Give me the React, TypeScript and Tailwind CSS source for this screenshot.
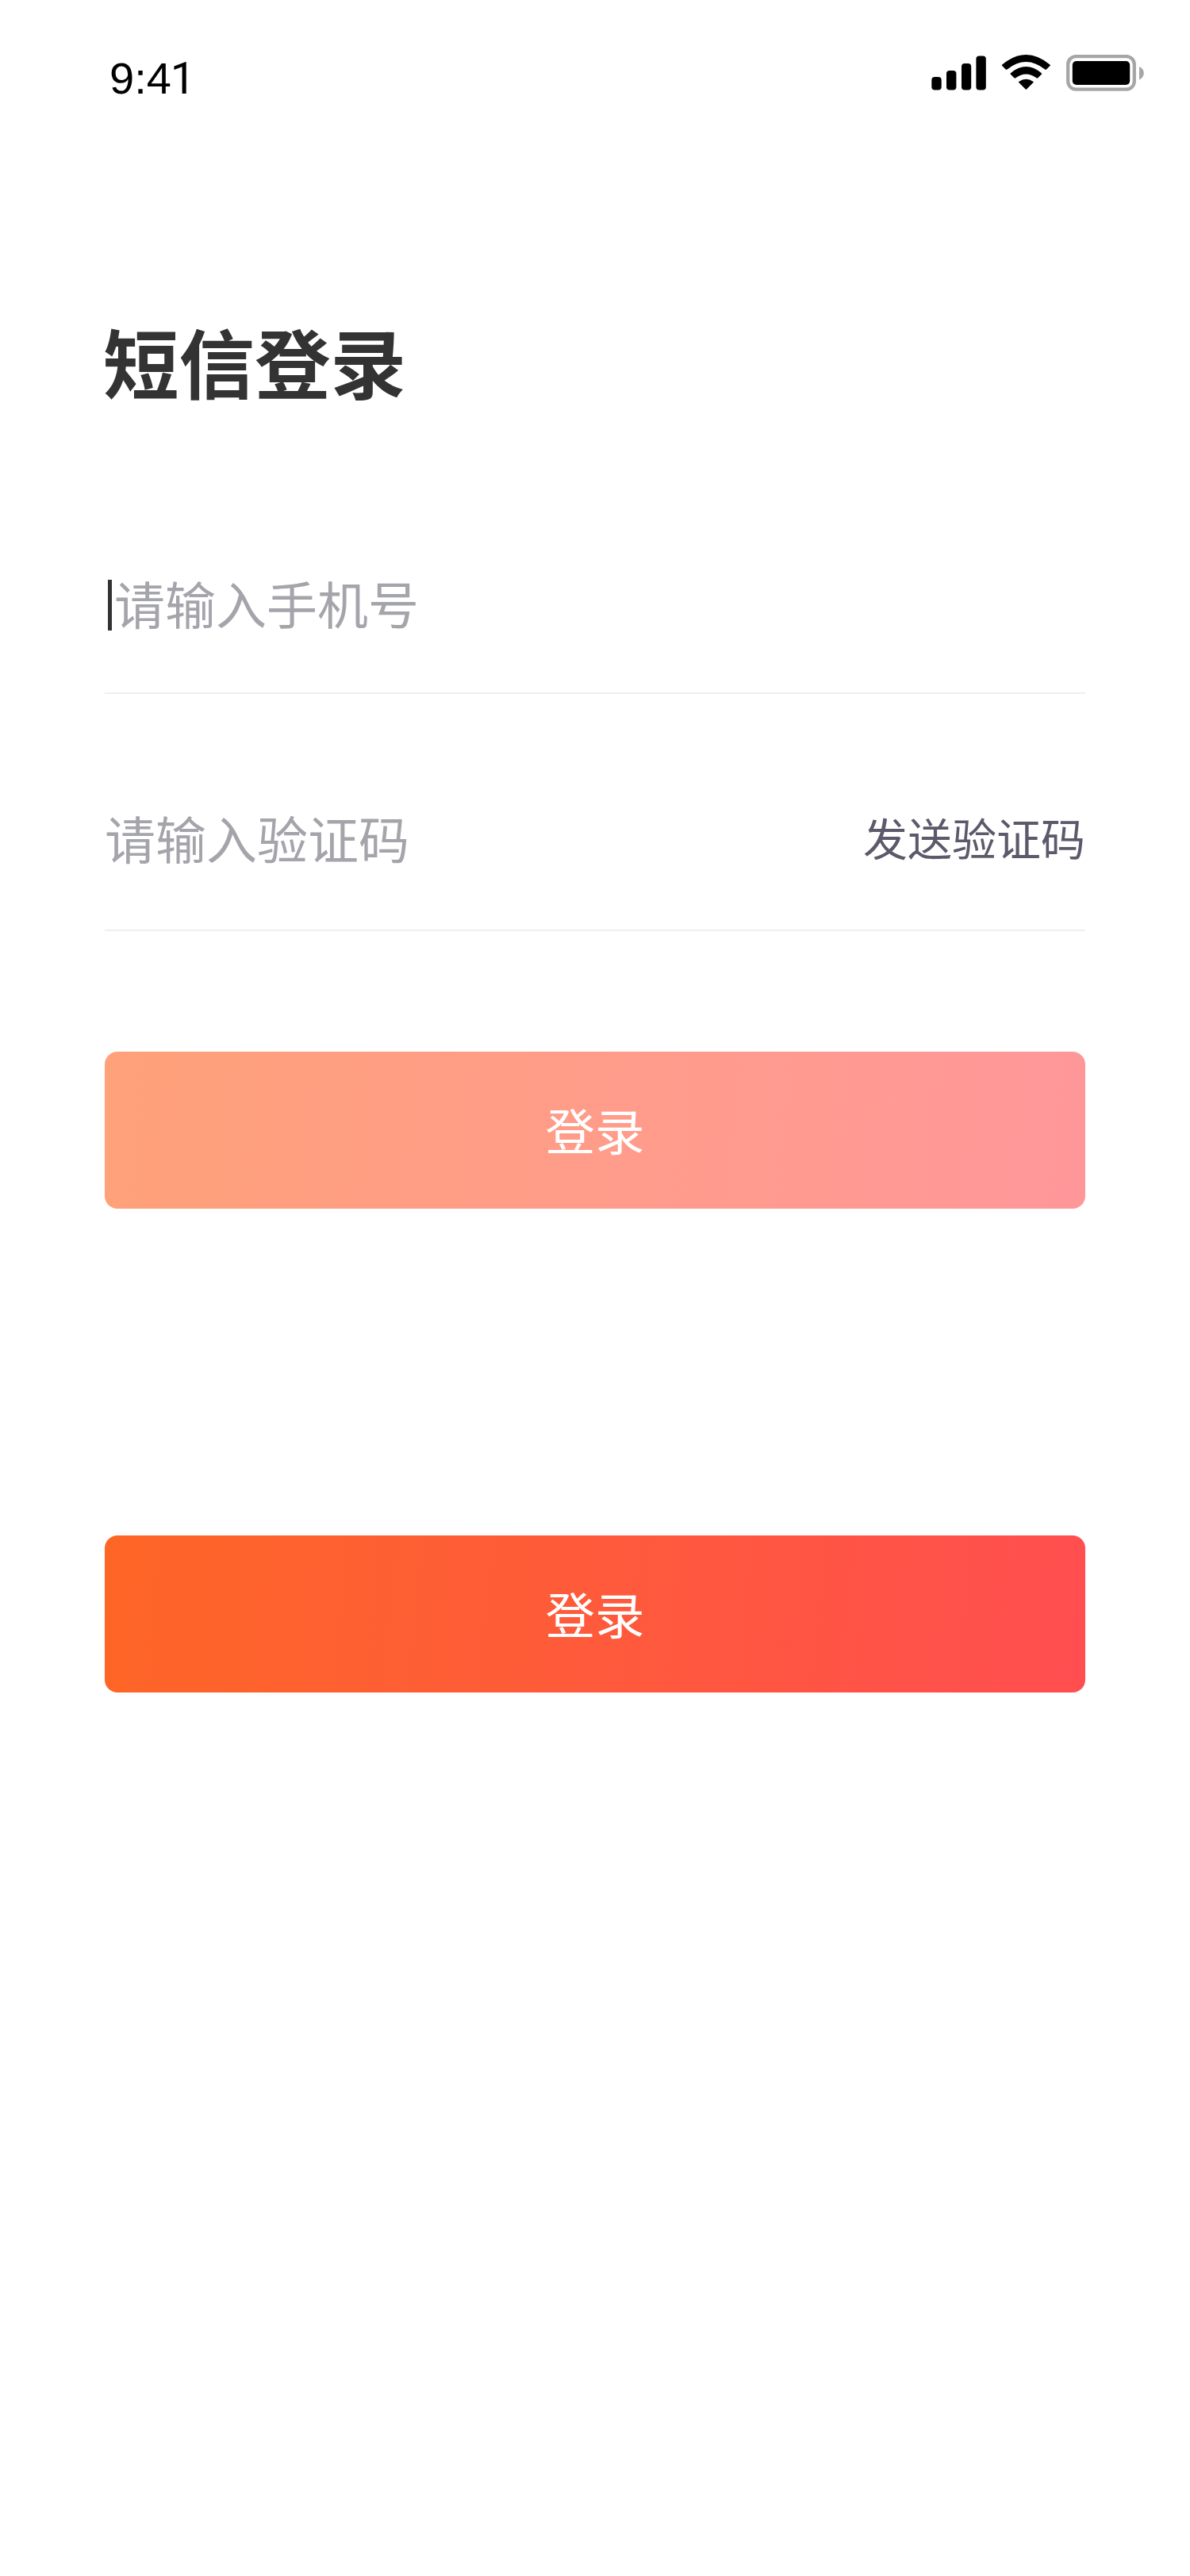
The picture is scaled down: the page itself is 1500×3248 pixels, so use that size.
export default function App() {
  return (
    <main className="flex h-[3248px] w-[1500px] flex-col bg-white font-['Noto_Sans_CJK_SC',sans-serif] text-[#333]">
      <header className="flex h-[184px] items-start justify-between pl-[138px] pr-[58px]">
        <time className="mt-[67px] font-['Liberation_Sans',sans-serif] text-[56px] leading-[64px] text-black">
          9:4<span className="-ml-px font-['Roboto',sans-serif]">1</span>
        </time>
        <svg className="mt-[66px]" width="270" height="52" viewBox="1172 66 270 52">
          <rect x="1174.3" y="97" width="12.4" height="16.5" rx="4" />
          <rect x="1193" y="89" width="12.4" height="24.5" rx="4" />
          <rect x="1212" y="80" width="12.2" height="33.5" rx="4" />
          <rect x="1230.4" y="70.4" width="12.4" height="43.1" rx="4" />
          <path d="M1263 81.7Q1293.3 56.4 1323.7 81.7Q1324.2 82.2 1323.7 82.7L1319 87.4Q1318 88.2 1317.2 87.6Q1293.3 68.6 1269.5 87.6Q1268.6 88.2 1267.7 87.4L1263 82.7Q1262.4 82.2 1263 81.7ZM1273.7 92.4Q1293.3 75.8 1313 92.4Q1313.5 93 1313 93.5L1308.3 98.2Q1307.4 99 1306.5 98.3Q1293.3 88.7 1280.2 98.3Q1279.3 99 1278.4 98.2L1273.7 93.5Q1273.2 93 1273.7 92.4ZM1284.2 103Q1293.3 96.4 1302.5 103Q1303 103.5 1302.5 104L1294 112.6Q1293.3 113.2 1292.7 112.6L1284.2 104Q1283.7 103.5 1284.2 103Z" />
          <rect x="1346.2" y="71.2" width="83.6" height="41.4" rx="10" fill="none" stroke="#a6a6a6" strokeWidth="4.3" />
          <rect x="1351.8" y="77" width="72.4" height="30" rx="5" />
          <path d="M1436 84Q1441.7 86.4 1441.7 92.2T1436 100.5Z" fill="#a6a6a6" />
        </svg>
      </header>
      <section className="flex flex-col px-[132px]">
        <h1 className="-ml-0.5 mt-[199px] text-[95.5px] font-bold leading-[144px]">短信登录</h1>
        <div className="mt-[184px] flex h-[164px] items-start border-b-2 border-[#efefef] text-[64px] leading-[96px] text-[#a4a4ab]">
          <i className="ml-1 mt-[20px] h-[64px] w-[5px] bg-[#333]" />
          <span className="ml-[3px]">请输入手机号</span>
        </div>
        <div className="mt-[132px] flex h-[167px] items-start justify-between border-b-2 border-[#efefef] text-[64px] leading-[96px] text-[#a4a4ab]">
          <span>请输入验证码</span>
          <button className="text-[56px] text-[#5c596b]">发送验证码</button>
        </div>
        <button className="mt-[152px] h-[198px] rounded-[16px] bg-[linear-gradient(96deg,#ffa179,#ff979a)] pb-0.5 text-[62.5px] text-white">登录</button>
        <button className="mt-[412px] h-[198px] rounded-[16px] bg-[linear-gradient(96deg,#fe6626,#ff4e50)] pb-0.5 text-[62.5px] text-white">登录</button>
      </section>
    </main>
  );
}
